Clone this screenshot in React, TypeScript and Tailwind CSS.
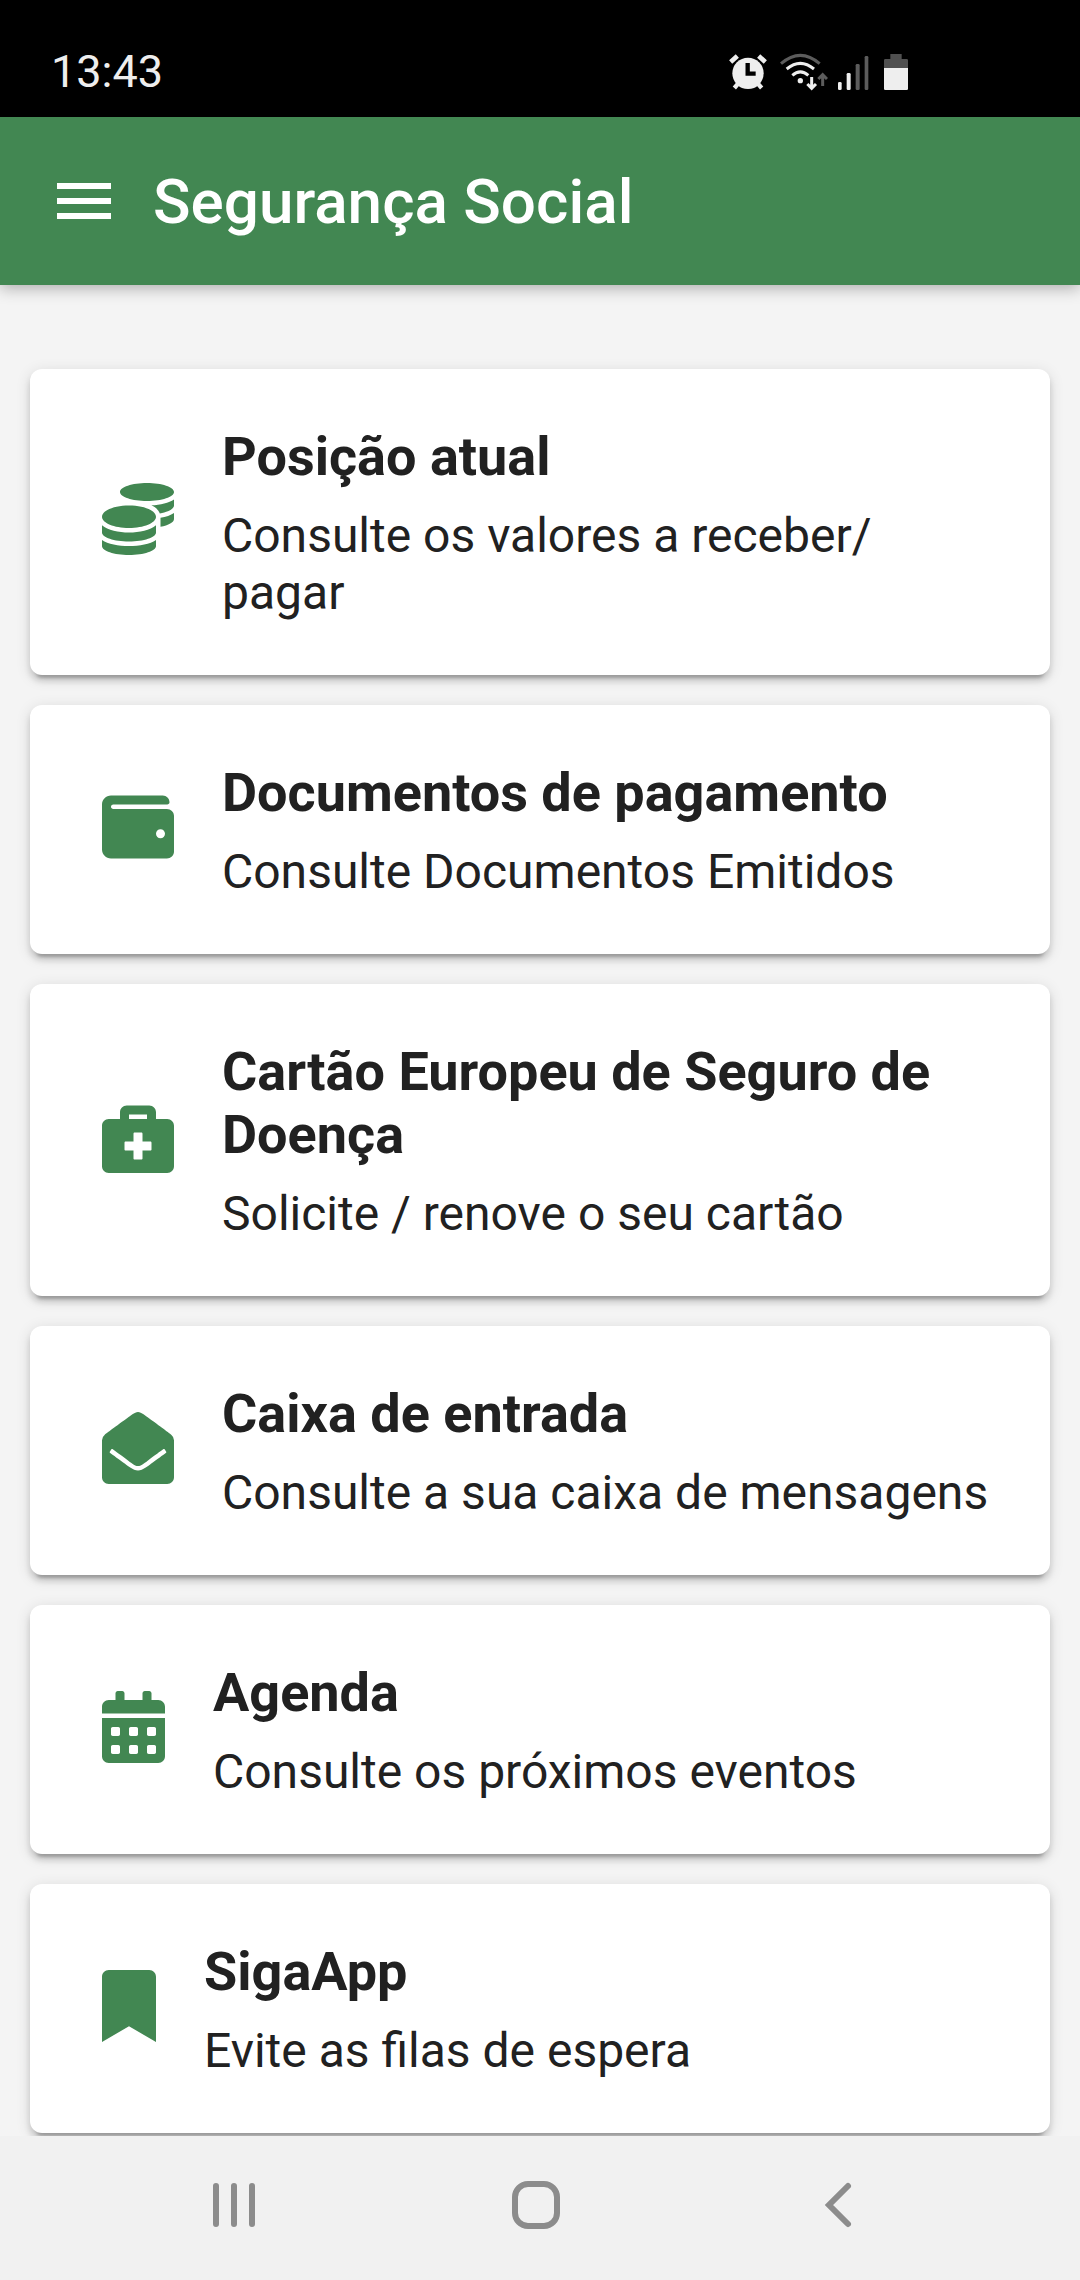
import React from "react";
import {
  FaBookmark,
  FaBriefcaseMedical,
  FaCalendarAlt,
  FaCoins,
  FaEnvelopeOpen,
  FaWallet,
} from "react-icons/fa";

interface MenuEntry {
  title: string;
  description: string;
  icon: React.ReactNode;
}

const entries: MenuEntry[] = [
  {
    title: "Posição atual",
    description: "Consulte os valores a receber/\u200bpagar",
    icon: <FaCoins className="h-[72px] w-[72px]" />,
  },
  {
    title: "Documentos de pagamento",
    description: "Consulte Documentos Emitidos",
    icon: <FaWallet className="h-[72px] w-[72px]" />,
  },
  {
    title: "Cartão Europeu de Seguro de Doença",
    description: "Solicite / renove o seu cartão",
    icon: <FaBriefcaseMedical className="h-[72px] w-[72px]" />,
  },
  {
    title: "Caixa de entrada",
    description: "Consulte a sua caixa de mensagens",
    icon: <FaEnvelopeOpen className="h-[72px] w-[72px]" />,
  },
  {
    title: "Agenda",
    description: "Consulte os próximos eventos",
    icon: <FaCalendarAlt className="h-[72px] w-[63px]" />,
  },
  {
    title: "SigaApp",
    description: "Evite as filas de espera",
    icon: <FaBookmark className="h-[72px] w-[54px]" />,
  },
];

function AlarmIcon() {
  return (
    <svg viewBox="84 66 120 114" className="h-[38px] w-10" fill="none" stroke="#eeeeee">
      <circle cx="144" cy="127" r="47" fill="#eeeeee" stroke="none" />
      <path d="M92 93 L112 75 M196 93 L176 75" strokeWidth="14" />
      <path d="M117 155 L103 171 M171 155 L185 171" strokeWidth="13" />
      <path d="M143 96 V128 H167" stroke="#000000" strokeWidth="13" />
    </svg>
  );
}

function WifiIcon() {
  return (
    <svg viewBox="234 66 150 114" className="h-[38px] w-[50px]" fill="none" strokeWidth="9">
      <path d="M243 98 Q301 48 359 98" stroke="#5c5c5c" />
      <path d="M260 114 Q301 80 342 114" stroke="#eeeeee" />
      <path d="M277 133 Q301 112 325 133" stroke="#eeeeee" />
      <circle cx="301" cy="149" r="8" fill="#eeeeee" />
      <path d="M335 138 V171 M322 159 L335 172 L348 159" stroke="#eeeeee" />
      <path d="M368 165 V132 M355 144 L368 131 L381 144" stroke="#5c5c5c" />
    </svg>
  );
}

function SignalIcon() {
  return (
    <svg viewBox="414 66 99 114" className="h-[38px] w-[33px]" fill="#eeeeee">
      <rect x="414" y="153" width="11" height="24" rx="4" />
      <rect x="440" y="126" width="12" height="51" rx="4" />
      <rect x="467" y="99" width="12" height="78" rx="4" fill="#5c5c5c" />
      <rect x="494" y="75" width="11" height="102" rx="4" fill="#5c5c5c" />
    </svg>
  );
}

function BatteryIcon() {
  return (
    <svg viewBox="543 66 87 114" className="h-[38px] w-[29px]">
      <path d="M571 69 H605 V84 H620 Q624 84 624 88 V111 H552 V88 Q552 84 556 84 H571 Z" fill="#505050" />
      <path d="M552 111 H624 V173 Q624 177 620 177 H556 Q552 177 552 173 Z" fill="#eeeeee" />
    </svg>
  );
}

function StatusBar() {
  return (
    <div className="flex h-[117px] shrink-0 items-center justify-between bg-black pt-[26px] pr-[170px] pl-[51px]">
      <span className="text-[45px] leading-[48px] text-[#eeeeee]">13:43</span>
      <div className="flex items-center gap-[10px]">
        <AlarmIcon />
        <WifiIcon />
        <SignalIcon />
        <BatteryIcon />
      </div>
    </div>
  );
}

function Header() {
  return (
    <header className="z-10 flex h-[168px] shrink-0 items-center gap-[42px] bg-[#428752] px-[57px] text-white shadow-[0_3px_15px_rgba(0,0,0,0.3)]">
      <button type="button" aria-label="Menu" className="flex w-[54px] flex-col gap-[9px]">
        <span className="h-[6px] bg-white" />
        <span className="h-[6px] bg-white" />
        <span className="h-[6px] bg-white" />
      </button>
      <h1 className="text-[62px] font-medium">Segurança Social</h1>
    </header>
  );
}

function MenuCard({ title, description, icon }: MenuEntry) {
  return (
    <button
      type="button"
      className="flex w-full items-center gap-[48px] rounded-[12px] bg-white pt-[56px] pr-[60px] pb-[54px] pl-[72px] text-left text-[#212121] shadow-[0_9px_3px_-6px_rgba(0,0,0,0.2),0_6px_6px_0_rgba(0,0,0,0.14),0_3px_15px_0_rgba(0,0,0,0.12)]"
    >
      <span className="mb-[8px] shrink-0 text-[#428752]">{icon}</span>
      <span className="flex flex-col gap-[19px]">
        <span className="text-[54px] leading-[63px] font-bold">{title}</span>
        <span className="text-[48px] leading-[57px]">{description}</span>
      </span>
    </button>
  );
}

function NavigationBar() {
  return (
    <nav className="flex h-[144px] shrink-0 bg-[#f1f1f1] pr-[91px] pb-[6px] pl-[83px] text-[#8c8c8c]">
      <button type="button" aria-label="Recentes" className="flex flex-1 items-center justify-center">
        <svg viewBox="0 0 48 48" className="h-12 w-12" stroke="currentColor" strokeWidth="6" strokeLinecap="round">
          <path d="M6 5 V43 M24 5 V43 M42 5 V43" />
        </svg>
      </button>
      <button type="button" aria-label="Início" className="flex flex-1 items-center justify-center">
        <svg viewBox="0 0 48 48" className="h-12 w-12" fill="none" stroke="currentColor" strokeWidth="6">
          <rect x="3" y="3" width="42" height="42" rx="13" />
        </svg>
      </button>
      <button type="button" aria-label="Voltar" className="flex flex-1 items-center justify-center">
        <svg viewBox="0 0 48 48" className="h-12 w-12" fill="none" stroke="currentColor" strokeWidth="6" strokeLinecap="round">
          <path d="M34 5 L15 24 L34 43" />
        </svg>
      </button>
    </nav>
  );
}

export default function App() {
  return (
    <div className="flex h-screen flex-col overflow-hidden bg-[#f4f4f4] font-['Roboto',sans-serif]">
      <StatusBar />
      <Header />

      {/* Menu entries */}
      <main className="flex min-h-0 flex-1 flex-col gap-[30px] overflow-y-auto px-[30px] pt-[84px] [scrollbar-width:none]">
        {entries.map((entry) => (
          <MenuCard key={entry.title} {...entry} />
        ))}
      </main>

      <NavigationBar />
    </div>
  );
}
